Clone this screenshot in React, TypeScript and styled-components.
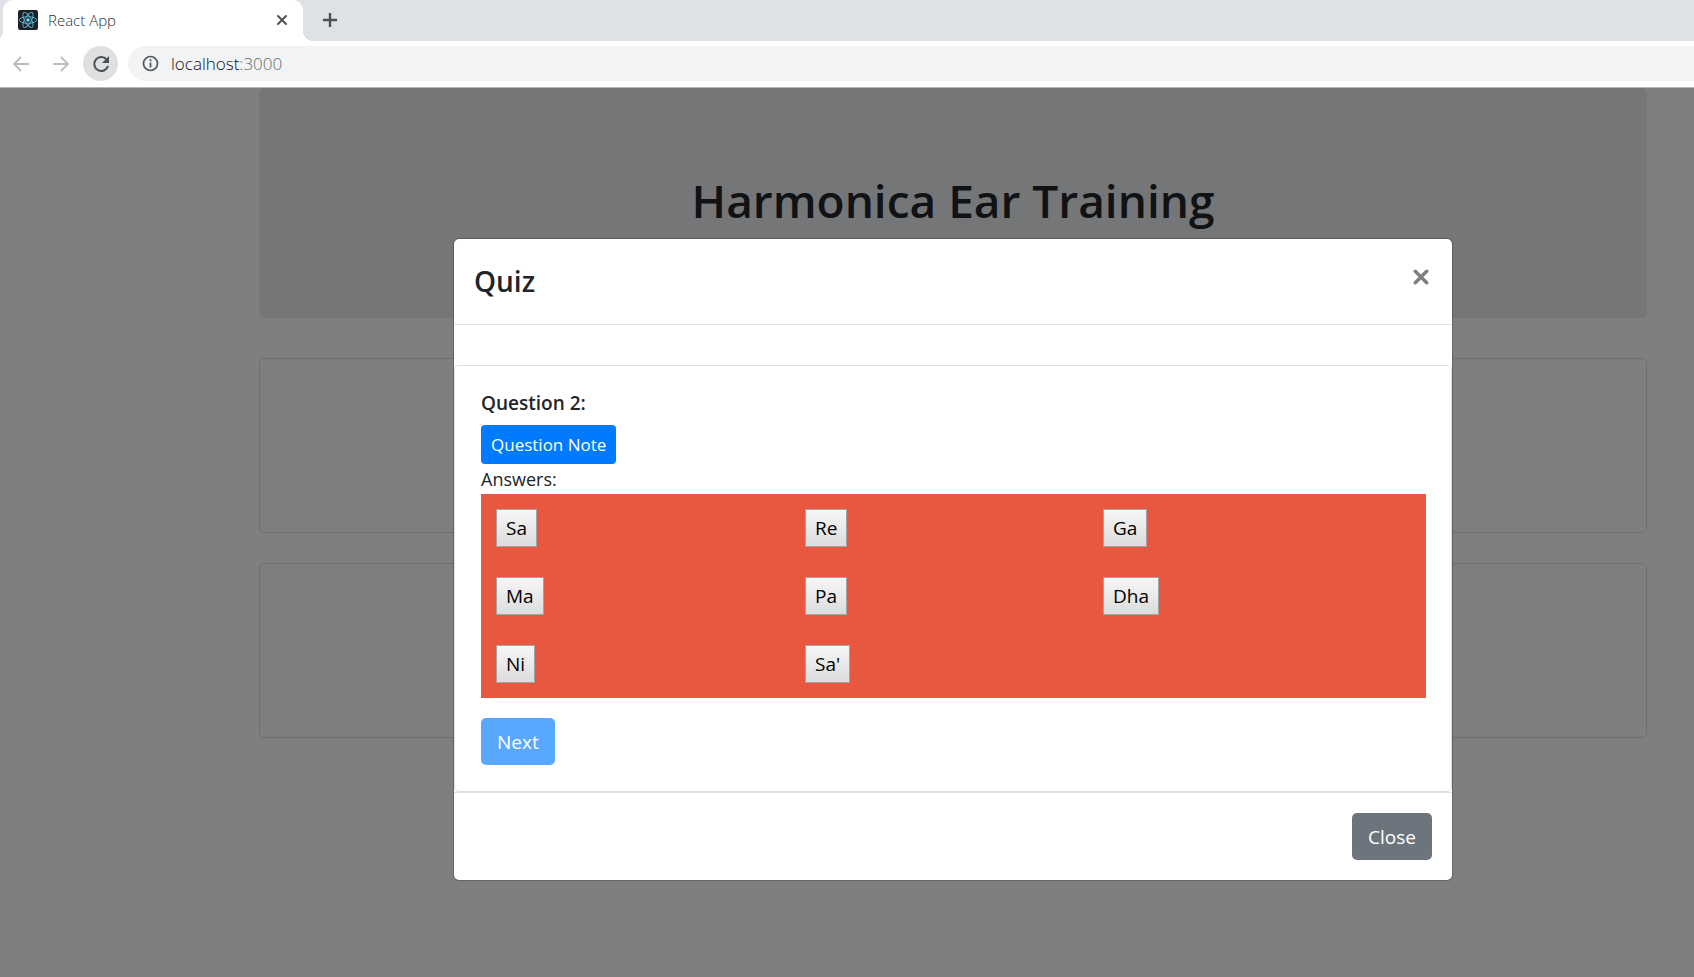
import React from "react";
import styled, { createGlobalStyle } from "styled-components";

const uiFont = '"Open Sans", "Noto Sans", sans-serif';

const GlobalStyle = createGlobalStyle`
  *, *::before, *::after { box-sizing: border-box; }
  body {
    margin: 0;
    background: #fff;
    color: #212529;
    font: 400 18px/30px ${uiFont};
  }
  button, input { font-family: inherit; }
`;

const Window = styled.div`
  display: flex;
  flex-direction: column;
  min-height: 100vh;
  overflow: hidden;
`;

/* Browser chrome */

const TabStrip = styled.div`
  display: flex;
  align-items: stretch;
  height: 41px;
  padding-left: 3px;
  background: #dee1e6;
`;

const Tab = styled.div`
  position: relative;
  display: flex;
  align-items: center;
  gap: 10px;
  width: 300px;
  padding: 0 14px 2px 15px;
  border-radius: 10px 10px 0 0;
  background: #fff;

  &::before,
  &::after {
    content: "";
    position: absolute;
    bottom: 0;
    width: 10px;
    height: 10px;
  }
  &::before {
    right: 100%;
    background: radial-gradient(circle at 0 0, transparent 10px, #fff 10px);
  }
  &::after {
    left: 100%;
    background: radial-gradient(circle at 100% 0, transparent 10px, #fff 10px);
  }
`;

const TabTitle = styled.span`
  flex: 1;
  color: #2c3034;
  font-size: 15px;
  font-weight: 300;
`;

const IconButton = styled.button`
  display: flex;
  align-items: center;
  justify-content: center;
  padding: 0;
  border: 0;
  background: transparent;
  color: #4d5156;
`;

const NewTabButton = styled(IconButton)`
  width: 54px;
  padding-bottom: 2px;
`;

const Toolbar = styled.div`
  display: flex;
  align-items: center;
  height: 47px;
  padding-left: 1px;
  padding-bottom: 1px;
  border-bottom: 1px solid #b4b5b7;
  background: #fff;
`;

const NavButton = styled(IconButton)`
  width: 40px;
  height: 35px;
  color: #bcbdbf;
`;

const ReloadButton = styled(IconButton)`
  width: 35px;
  height: 35px;
  margin: 0 10px 0 2px;
  border-radius: 50%;
  background: #dfe0e1;
`;

const AddressBar = styled.div`
  display: flex;
  flex: 1;
  align-items: center;
  gap: 12px;
  height: 35px;
  padding-left: 14px;
  border-radius: 18px 0 0 18px;
  background: #f1f3f4;
  color: #55595e;
`;

const Address = styled.a`
  color: #101114;
  font-size: 17px;
  font-weight: 300;
  text-decoration: none;
`;

const Port = styled.span`
  color: #66696e;
`;

/* Page behind the dialog */

const Page = styled.div`
  position: relative;
  flex: 1;
`;

const Container = styled.main`
  display: flex;
  flex-direction: column;
  gap: 30px;
  padding: 0 47px 0 259px;
`;

const Jumbotron = styled.header`
  height: 230px;
  margin-bottom: 10px;
  padding: 80px 40px;
  border-radius: 6px;
  background: #e9ecef;
  text-align: center;
`;

const Title = styled.h1`
  margin: 0;
  font-size: 46px;
  font-weight: 600;
  line-height: 64px;
`;

const Panel = styled.section`
  height: 175px;
  border: 1px solid #dfdfdf;
  border-radius: 5px;
`;

/* Dialog */

const Backdrop = styled.div`
  position: absolute;
  inset: 0;
  display: flex;
  align-items: flex-start;
  justify-content: center;
  padding: 150px 0 30px 212px;
  background: rgba(0, 0, 0, 0.5);
`;

const Dialog = styled.div`
  width: 100%;
  max-width: 1000px;
  border: 1px solid rgba(0, 0, 0, 0.2);
  border-radius: 6px;
  background: #fff;
  background-clip: padding-box;
`;

const DialogHeader = styled.div`
  display: flex;
  align-items: flex-start;
  justify-content: space-between;
  padding: 20px;
  border-bottom: 1px solid #dee2e6;
`;

const DialogTitle = styled.h2`
  margin: 0;
  font-size: 28px;
  font-weight: 600;
  line-height: 45px;
`;

const DismissButton = styled(IconButton)`
  width: 22px;
  height: 36px;
  color: #7f7f7f;
`;

const QuizCard = styled.div`
  margin-top: 40px;
  padding: 25px 25px 26px 26px;
  border: 1px solid #dfdfdf;
  border-radius: 5px;
`;

const QuestionHeading = styled.h3`
  margin: 0 0 10px;
  font-size: 19px;
  font-weight: 600;
  line-height: 24px;
`;

const Button = styled.button<{ $tone: "primary" | "secondary"; $small?: boolean }>`
  display: block;
  height: ${(p) => (p.$small ? 39 : 47)}px;
  padding: ${(p) => (p.$small ? "0 10px" : "0 16px")};
  border: 0;
  border-radius: ${(p) => (p.$small ? 4 : 5)}px;
  background: ${(p) => (p.$tone === "primary" ? "#007bff" : "#6c757d")};
  color: #fff;
  font-size: ${(p) => (p.$small ? 17 : 19)}px;

  &:disabled {
    opacity: 0.65;
  }
`;

const Answers = styled.div`
  display: grid;
  grid-template-columns: 309fr 298fr 338fr;
  margin-bottom: 20px;
  background: #e8573f;
`;

const AnswerCell = styled.div`
  padding: 15px;
`;

const AnswerButton = styled.button`
  display: block;
  height: 38px;
  padding: 0 9px;
  border: 1px solid #a3a3a3;
  background: linear-gradient(#f7f7f7, #dcdcdc);
  color: #000;
  font-size: 19px;
`;

const DialogFooter = styled.div`
  display: flex;
  justify-content: flex-end;
  padding: 20px;
  border-top: 1px solid #dee2e6;
`;

const notes = ["Sa", "Re", "Ga", "Ma", "Pa", "Dha", "Ni", "Sa'"];

const ReactIcon = () => (
  <svg width="20" height="20" viewBox="0 0 20 20" aria-hidden="true">
    <rect width="20" height="20" rx="2" fill="#1c2127" />
    <g fill="none" stroke="#5cb9d3" strokeWidth="0.9">
      <ellipse cx="10" cy="10" rx="8.6" ry="3.3" />
      <ellipse cx="10" cy="10" rx="8.6" ry="3.3" transform="rotate(60 10 10)" />
      <ellipse cx="10" cy="10" rx="8.6" ry="3.3" transform="rotate(120 10 10)" />
    </g>
    <circle cx="10" cy="10" r="1.8" fill="#61dafb" />
  </svg>
);

const CrossIcon = ({ size, weight, inset }: { size: number; weight: number; inset: number }) => (
  <svg width={size} height={size} viewBox="0 0 14 14" aria-hidden="true">
    <path
      d={`M${inset} ${inset}L${14 - inset} ${14 - inset}M${14 - inset} ${inset}L${inset} ${14 - inset}`}
      stroke="currentColor"
      strokeWidth={weight}
      strokeLinecap="round"
    />
  </svg>
);

const PlusIcon = () => (
  <svg width="16" height="16" viewBox="0 0 16 16" aria-hidden="true">
    <path d="M8 1v14M1 8h14" stroke="currentColor" strokeWidth="2.4" />
  </svg>
);

const ArrowIcon = ({ flip }: { flip?: boolean }) => (
  <svg width="18" height="18" viewBox="0 0 18 18" aria-hidden="true">
    <path
      d={flip ? "M1 9h15M9 2l7 7-7 7" : "M17 9H2M9 2L2 9l7 7"}
      fill="none"
      stroke="currentColor"
      strokeWidth="1.8"
    />
  </svg>
);

const ReloadIcon = () => (
  <svg width="18" height="18" viewBox="0 0 18 18" aria-hidden="true">
    <path d="M14.6 4.4A7 7 0 1 0 16 11" fill="none" stroke="currentColor" strokeWidth="2.1" />
    <path d="M17 1v7h-7z" fill="currentColor" />
  </svg>
);

const InfoIcon = () => (
  <svg width="17" height="17" viewBox="0 0 17 17" aria-hidden="true">
    <circle cx="8.5" cy="8.5" r="7" fill="none" stroke="currentColor" strokeWidth="1.7" />
    <path d="M8.5 7.5v5M8.5 4.3v1.9" stroke="currentColor" strokeWidth="1.8" />
  </svg>
);

export default function App() {
  return (
    <Window>
      <GlobalStyle />
      <TabStrip>
        <Tab>
          <ReactIcon />
          <TabTitle>React App</TabTitle>
          <IconButton aria-label="Close tab">
            <CrossIcon size={14} weight={2} inset={3} />
          </IconButton>
        </Tab>
        <NewTabButton aria-label="New tab">
          <PlusIcon />
        </NewTabButton>
      </TabStrip>
      <Toolbar>
        <NavButton aria-label="Back">
          <ArrowIcon />
        </NavButton>
        <NavButton aria-label="Forward">
          <ArrowIcon flip />
        </NavButton>
        <ReloadButton aria-label="Reload">
          <ReloadIcon />
        </ReloadButton>
        <AddressBar>
          <InfoIcon />
          <Address href="#">
            localhost<Port>:3000</Port>
          </Address>
        </AddressBar>
      </Toolbar>
      <Page>
        <Container>
          <Jumbotron>
            <Title>Harmonica Ear Training</Title>
          </Jumbotron>
          <Panel />
          <Panel />
        </Container>
        <Backdrop>
          <Dialog role="dialog" aria-modal="true" aria-labelledby="quiz-title">
            <DialogHeader>
              <DialogTitle id="quiz-title">Quiz</DialogTitle>
              <DismissButton aria-label="Dismiss">
                <CrossIcon size={16} weight={3} inset={2} />
              </DismissButton>
            </DialogHeader>
            <QuizCard>
              <QuestionHeading>Question 2:</QuestionHeading>
              <Button $tone="primary" $small>
                Question Note
              </Button>
              <div>Answers:</div>
              <Answers>
                {notes.map((note) => (
                  <AnswerCell key={note}>
                    <AnswerButton>{note}</AnswerButton>
                  </AnswerCell>
                ))}
              </Answers>
              <Button $tone="primary" disabled>
                Next
              </Button>
            </QuizCard>
            <DialogFooter>
              <Button $tone="secondary">Close</Button>
            </DialogFooter>
          </Dialog>
        </Backdrop>
      </Page>
    </Window>
  );
}
